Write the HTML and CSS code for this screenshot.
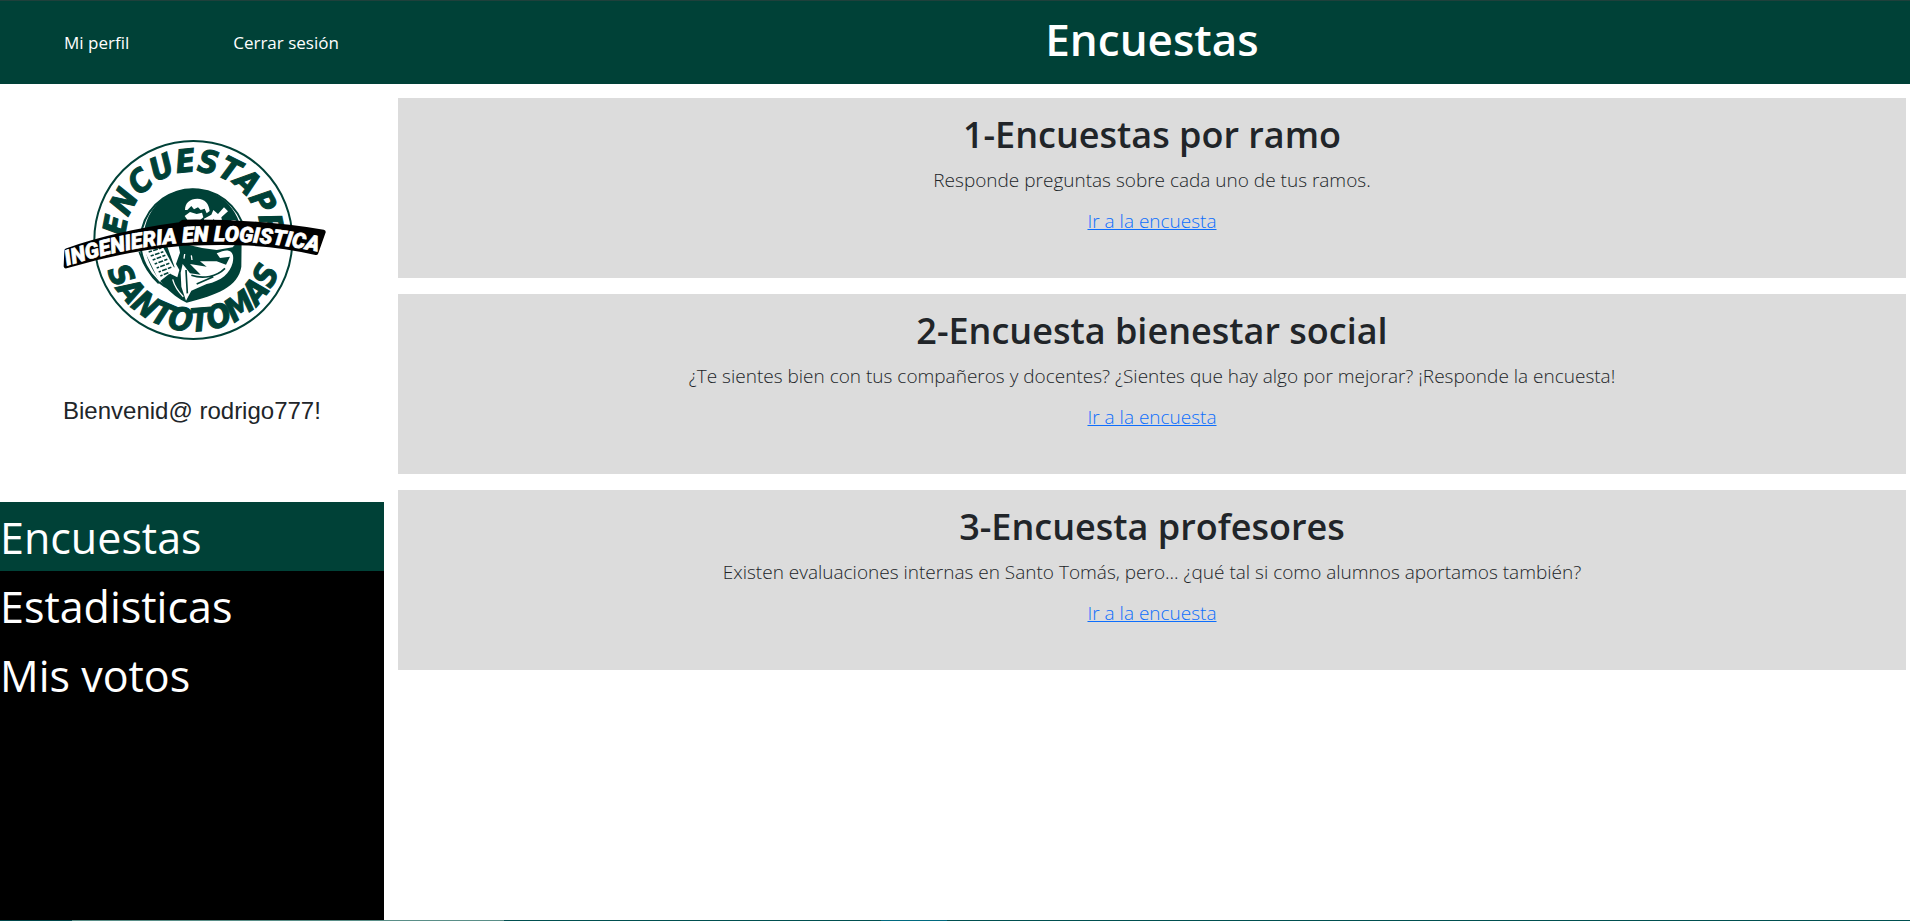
FILE: index.html
```html
<!DOCTYPE html>
<html lang="es">
<head>
    <meta charset="UTF-8">
    <meta name="viewport" content="width=device-width, initial-scale=1.0">
    <title>Encuestas</title>
    <link rel="stylesheet" href="styles.css">
</head>
<body>
    <header class="header">
        <nav class="header-nav">
            <a href="#">Mi perfil</a>
            <a href="#">Cerrar sesión</a>
        </nav>
        <h1 class="header-title">Encuestas</h1>
    </header>

    <div class="layout">
        <aside class="sidebar">
            <div class="profile">
                <svg class="logo" viewBox="0 0 870 660" role="img" aria-label="Encuestapp Santo Tomas">
                    <defs>
                        <path id="arc-top" d="M228 365 A205 205 0 1 1 632 365"/>
                        <path id="arc-bottom" d="M156 330 A274 274 0 0 0 704 330"/>
                        <path id="arc-banner" d="M56 406 C300 328 540 312 800 364"/>
                    </defs>
                    <circle class="ring" cx="430" cy="330" r="297"/>
                    <text class="logo-text"><textPath href="#arc-top" startOffset="50%">ENCUESTAPP</textPath></text>
                    <text class="logo-text"><textPath href="#arc-bottom" startOffset="50%">SANTOTOMAS</textPath></text>

                    <!-- fondo del monje -->
                    <path class="ring" d="M370 482 A158 158 0 1 1 587 330"/>
                    <path class="green" d="M287 365 A147 147 0 1 1 575 325 L574 410 C565 470 500 495 410 518 C365 498 305 440 287 365 Z"/>

                    <!-- cabeza y hombros -->
                    <path class="white" d="M405 240 C405 218 420 206 442 206 C465 206 477 222 479 243 L470 250 L464 236 L452 240 L444 232 L432 238 L424 228 L412 240 Z"/>
                    <path class="white" d="M404 258 L420 246 L440 252 L456 248 L460 262 L448 272 L455 282 L410 284 L414 272 Z"/>
                    <path class="white" d="M462 266 L484 254 L490 240 L504 252 L522 232 L534 244 L514 262 L518 282 L494 282 L492 266 L478 284 L462 284 Z"/>
                    <path class="white" d="M536 284 C540 264 562 266 568 286 Z"/>

                    <!-- libro -->
                    <path class="white" d="M280 356 L336 346 L375 418 L328 455 Z"/>
                    <path class="fold" d="M296 366 L334 354 M302 378 L340 365 M308 390 L346 376 M314 402 L352 388 M320 414 L358 400 M326 426 L364 412 M331 438 L369 422"/>
                    <path class="cut" d="M304 354 L342 440 M322 350 L359 432"/>
                    <path class="fold" d="M268 365 C280 405 300 436 326 460"/>

                    <!-- tunica -->
                    <path class="white" d="M350 344 L384 338 L390 368 L378 402 L388 420 L382 442 L362 432 L352 420 L374 412 Z"/>
                    <path class="white" d="M414 344 L446 334 L562 336 L548 352 L500 360 L456 354 Z"/>
                    <path class="white" d="M500 370 C540 350 555 366 548 398 C540 430 515 452 470 462 L424 482 L408 512 L394 470 L392 428 L398 402 L420 430 L452 434 L420 402 L470 410 L450 394 L500 394 L528 404 L540 380 L510 384 Z"/>
                    <path class="fold" d="M424 436 C460 448 500 440 525 415 M408 420 L412 490 M440 462 L490 440"/>
                    <path class="cut" d="M368 448 C374 470 386 486 400 500 M404 372 L402 386 M424 376 L426 390"/>

                    <!-- cinta -->
                    <path class="banner" d="M50 362 C155 325 270 300 388 284 L400 276 C550 274 690 284 820 306 L798 368 C650 334 540 336 400 340 C280 350 170 372 48 408 Z"/>
                    <text class="banner-text"><textPath href="#arc-banner" startOffset="50%">INGENIERIA EN LOGISTICA</textPath></text>
                </svg>
                <p class="welcome">Bienvenid@ rodrigo777!</p>
            </div>
            <nav class="menu">
                <a class="active" href="#">Encuestas</a>
                <a href="#">Estadisticas</a>
                <a href="#">Mis votos</a>
            </nav>
        </aside>

        <main class="content">
            <section class="card">
                <h2>1-Encuestas por ramo</h2>
                <p>Responde preguntas sobre cada uno de tus ramos.</p>
                <a href="#">Ir a la encuesta</a>
            </section>
            <section class="card">
                <h2>2-Encuesta bienestar social</h2>
                <p>¿Te sientes bien con tus compañeros y docentes? ¿Sientes que hay algo por mejorar? ¡Responde la encuesta!</p>
                <a href="#">Ir a la encuesta</a>
            </section>
            <section class="card">
                <h2>3-Encuesta profesores</h2>
                <p>Existen evaluaciones internas en Santo Tomás, pero... ¿qué tal si como alumnos aportamos también?</p>
                <a href="#">Ir a la encuesta</a>
            </section>
        </main>
    </div>
    <div class="bottom-line"></div>
</body>
</html>
```
FILE: styles.css
```css
* {
    box-sizing: border-box;
}
body {
    display: flex;
    flex-direction: column;
    min-height: 100vh;
    margin: 0;
    font-family: "Segoe UI", "Open Sans", "Noto Sans", sans-serif;
    color: #212529;
    background: #fff;
}
h1, h2, p {
    margin: 0;
}
.header {
    display: grid;
    grid-template-columns: 384px 1fr;
    height: 84px;
    background: #004137;
    border-top: 1px solid #1f403b;
    color: #fff;
}
.header-nav {
    display: flex;
    align-items: center;
    gap: 104px;
    padding-left: 64px;
    white-space: nowrap;
}
.header-nav a {
    color: #fff;
    font-size: 17px;
    text-decoration: none;
}
.header-title {
    padding: 6px 0 0 10px;
    font-size: 44px;
    font-weight: 600;
    line-height: 64px;
    text-align: center;
}
.layout {
    display: grid;
    flex: 1;
    grid-template-columns: 384px 1fr;
}
.sidebar {
    display: flex;
    flex-direction: column;
}
.profile {
    height: 418px;
    padding: 46px 50px 0;
}
.logo {
    display: block;
    width: 290px;
    height: 220px;
}
.welcome {
    padding: 46px 0 0 13px;
    font-family: Arial, "Liberation Sans", sans-serif;
    font-size: 24px;
    line-height: 30px;
    white-space: nowrap;
}
.menu {
    flex: 1;
    background: #000;
}
.menu a {
    display: block;
    height: 69px;
    color: #fff;
    font-size: 43px;
    line-height: 72px;
    text-decoration: none;
}
.menu .active {
    background: #004137;
}
.content {
    display: flex;
    flex-direction: column;
    gap: 16px;
    padding: 14px 4px 14px 14px;
}
.card {
    height: 180px;
    padding-top: 14px;
    background: #dcdcdc;
    font-size: 19px;
    font-weight: 300;
    line-height: 30px;
    text-align: center;
}
.card h2 {
    margin-bottom: 7px;
    font-size: 36px;
    font-weight: 600;
    line-height: 46px;
}
.card p {
    margin-bottom: 11px;
}
.card a {
    color: #0d6efd;
}
.bottom-line {
    height: 1px;
    background: linear-gradient(to right, #00474b 72px, #5a8f88 72px 504px, #004f50 504px 881px, #006a80 881px 947px, #004f50 947px);
}

/* logo */
.ring {
    fill: none;
    stroke: #004137;
    stroke-width: 6;
}
.green {
    fill: #004137;
}
.white {
    fill: #fff;
}
.fold {
    fill: none;
    stroke: #004137;
    stroke-width: 5;
}
.cut {
    fill: none;
    stroke: #fff;
    stroke-width: 4;
}
.logo-text {
    fill: #004137;
    stroke: #004137;
    stroke-width: 3;
    font-family: "DejaVu Sans Condensed", "DejaVu Sans", sans-serif;
    font-size: 95px;
    font-weight: 700;
    font-style: italic;
    text-anchor: middle;
}
.banner {
    fill: #000;
    stroke: #000;
    stroke-width: 14;
    stroke-linejoin: round;
}
.banner-text {
    fill: #fff;
    stroke: #fff;
    stroke-width: 2;
    font-family: Roboto, "Liberation Sans", sans-serif;
    font-size: 64px;
    font-weight: 900;
    font-style: italic;
    text-anchor: middle;
}
```
